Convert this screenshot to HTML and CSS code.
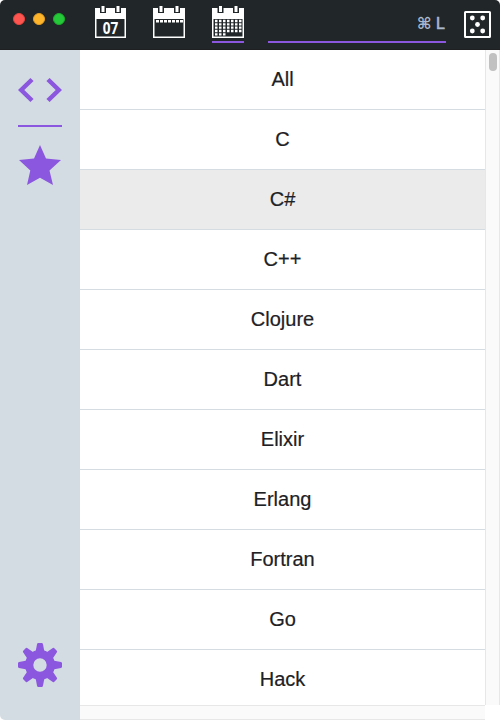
FILE: index.html
```html
<!DOCTYPE html>
<html lang="en">
<head>
<meta charset="utf-8">
<title>Trending</title>
<link rel="stylesheet" href="styles.css">
</head>
<body>
<div class="window">
  <header class="titlebar">
    <div class="lights"><i class="light red"></i><i class="light yellow"></i><i class="light green"></i></div>
    <nav class="periods">
      <a class="period day">
        <svg width="32" height="32" viewBox="0 0 32 32">
          <path class="frame" fill-rule="evenodd" d="M0 2H31V32H0ZM1.500 13V30.500H29.500V13Z"/>
          <path class="ring-gap" d="M5 0h6v7h-6zM20 0h6v7h-6z"/>
          <path class="frame" d="M6.500 0h3v6h-3zM21.500 0h3v6h-3z"/>
          <text class="date" x="15.500" y="28" text-anchor="middle" textLength="15.500" lengthAdjust="spacingAndGlyphs">07</text>
        </svg>
      </a>
      <a class="period">
        <svg width="32" height="32" viewBox="0 0 32 32">
          <path class="frame" fill-rule="evenodd" d="M0 2H32V32H0ZM1.500 13V30.500H30.500V13Z"/>
          <path class="ring-gap" d="M5 0h6v7h-6zM21 0h6v7h-6z"/>
          <path class="frame" d="M6.500 0h3v6h-3zM22.500 0h3v6h-3z"/>
          <path class="days" d="M3 15.200H30"/>
        </svg>
      </a>
      <a class="period selected">
        <svg width="32" height="32" viewBox="0 0 32 32">
          <path class="frame" fill-rule="evenodd" d="M0 2H32V32H0ZM1.500 13V30.500H30.500V13Z"/>
          <path class="ring-gap" d="M5.500 0h6v7h-6zM21 0h6v7h-6z"/>
          <path class="frame" d="M7 0h3v6H7zM22.500 0h3v6h-3z"/>
          <path class="days small" d="M3 15H30M3 18.300H30M3 21.700H30M3 25H30M3 28.300H14"/>
        </svg>
      </a>
    </nav>
    <div class="search">⌘ <span>L</span></div>
    <svg class="dice" width="27" height="27" viewBox="0 0 27 27">
      <rect class="dice-frame" x="1" y="1" width="25" height="25" rx=".5"/>
      <g class="frame"><circle cx="8.300" cy="7" r="2.400"/><circle cx="18.700" cy="7" r="2.400"/><circle cx="13.500" cy="13.500" r="2.400"/><circle cx="8.300" cy="20" r="2.400"/><circle cx="18.700" cy="20" r="2.400"/></g>
    </svg>
  </header>
  <div class="body">
    <aside class="sidebar">
      <a class="tab code-tab">
        <svg width="44" height="26" viewBox="0 0 44 26"><path class="chevron" d="M14 2.500L3.200 13L14 23.500M30 2.500L40.800 13L30 23.500"/></svg>
      </a>
      <a class="tab">
        <svg width="44" height="42" viewBox="0 0 44 42"><path class="accent" d="M22 0L28 13.500L43 15L31.500 25.500L35 40L22 32.700L9 40L12.300 25.500L1 15L16 13.500Z"/></svg>
      </a>
      <a class="tab settings">
        <svg width="44" height="44" viewBox="-22 -22 44 44">
          <defs><path id="tooth" d="M-4.500-13L-2.900-21Q-2.700-22-1.700-22H1.700Q2.700-22 2.900-21L4.500-13Z"/></defs>
          <g class="accent"><use href="#tooth"/><use href="#tooth" transform="rotate(45)"/><use href="#tooth" transform="rotate(90)"/><use href="#tooth" transform="rotate(135)"/><use href="#tooth" transform="rotate(180)"/><use href="#tooth" transform="rotate(225)"/><use href="#tooth" transform="rotate(270)"/><use href="#tooth" transform="rotate(315)"/>
          <path fill-rule="evenodd" d="M0-15A15 15 0 1 1 0 15A15 15 0 1 1 0-15ZM0-6.700A6.700 6.700 0 1 0 0 6.700A6.700 6.700 0 1 0 0-6.700Z"/></g>
        </svg>
      </a>
    </aside>
    <main class="pane">
      <ul class="languages">
        <li>All</li>
        <li>C</li>
        <li class="current">C#</li>
        <li>C++</li>
        <li>Clojure</li>
        <li>Dart</li>
        <li>Elixir</li>
        <li>Erlang</li>
        <li>Fortran</li>
        <li>Go</li>
        <li>Hack</li>
      </ul>
      <div class="track vertical"><div class="thumb"></div></div>
      <div class="track horizontal"></div>
    </main>
  </div>
</div>
</body>
</html>
```
FILE: styles.css
```css
* { box-sizing: border-box; }
body { margin: 0; background: #fff; font-family: "Liberation Sans", Arial, sans-serif; }
svg { display: block; }
.window { width: 500px; height: 720px; overflow: hidden; border-radius: 5px; background: #fff; }
.titlebar { display: flex; height: 50px; background: #212629; border-bottom: 1px solid #1e2022; }
.lights { display: flex; gap: 8px; width: 95px; padding: 13px 0 0 13px; }
.light { width: 12px; height: 12px; border-radius: 50%; }
.red { background: #ff5550; border: 1px solid #e8453f; }
.yellow { background: #ffb52b; border: 1px solid #e5a021; }
.green { background: #24c838; border: 1px solid #1bb02c; }
.periods { display: flex; gap: 27px; padding-top: 6px; }
.period { width: 32px; height: 37px; }
.day { width: 31px; }
.selected { border-bottom: 2px solid #8c57df; }
.frame { fill: #fff; }
.ring-gap { fill: #212629; }
.date { fill: #fff; font: bold 16px "Noto Sans", "Open Sans", sans-serif; }
.days { fill: none; stroke: #fff; stroke-width: 2.600; stroke-dasharray: 3 1; }
.small { stroke-width: 2.300; stroke-dasharray: 2.500 1.500; }
.search { width: 178px; height: 43px; margin-left: 24px; padding-top: 13px; border-bottom: 2px solid #8c57df; color: #a9b8cc; font: bold 16px/21px "Liberation Sans", "DejaVu Sans", sans-serif; text-align: right; }
.search span { display: inline-block; width: 10px; text-align: left; font-weight: normal; -webkit-text-stroke: .6px #a9b8cc; }
.dice { margin: 11px 0 0 18px; }
.dice-frame { fill: none; stroke: #fff; stroke-width: 2; }
.body { display: flex; height: 670px; }
.sidebar { display: flex; flex-direction: column; align-items: center; width: 80px; padding: 27px 0 33px; background: #d4dce3; }
.tab { display: block; width: 44px; }
.code-tab { height: 50px; margin-bottom: 18px; border-bottom: 2px solid #8c57df; }
.settings { margin-top: auto; }
.accent { fill: #8c57df; }
.chevron { fill: none; stroke: #8c57df; stroke-width: 4.500; }
.pane { display: grid; grid-template: 655px 15px / 405px 15px; }
.languages { margin: 0; padding: 0; overflow: hidden; list-style: none; }
.languages li { height: 60px; border-bottom: 1px solid #d5dce2; color: #1d2125; font-size: 20px; line-height: 58px; text-align: center; -webkit-text-stroke: .2px #1d2125; }
.languages .current { background: #ebebeb; }
.track { background: #fafafa; }
.vertical { padding: 3px 2px 0 3px; border: solid #e7e7e7; border-width: 0 1px; }
.thumb { width: 8px; height: 18px; border-radius: 4px; background: #c1c1c1; }
.horizontal { border: solid #e7e7e7; border-width: 1px 0; }
```
